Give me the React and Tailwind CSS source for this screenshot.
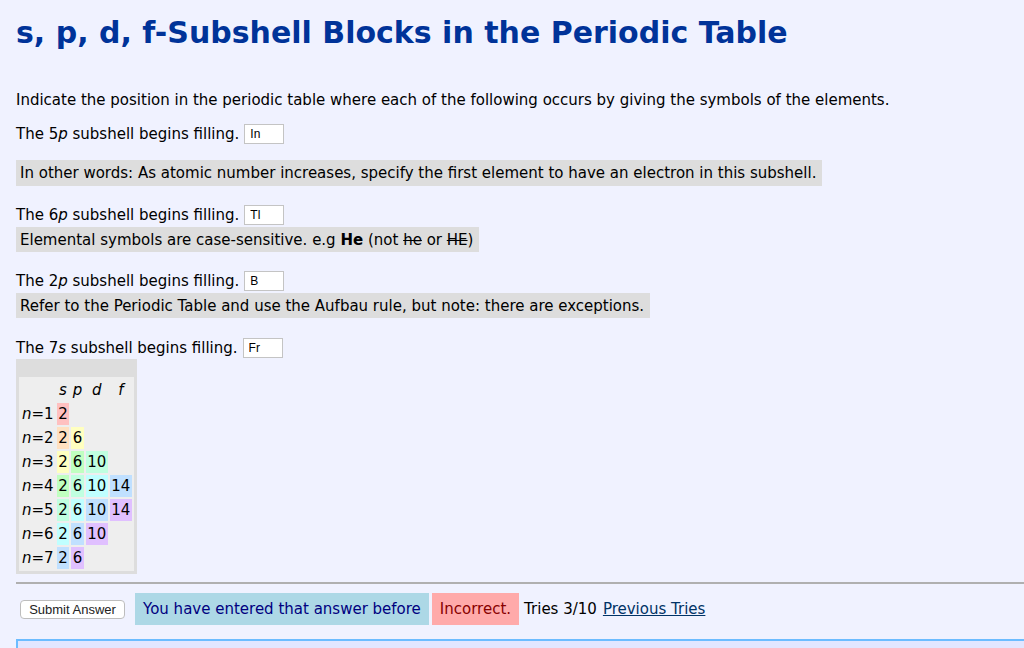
const shades = ['#ffc0c0', '#ffe0c0', '#ffffc0', '#c0ffc0', '#c0ffe0', '#c0ffff', '#c0e0ff', '#e0c0ff'];

// electrons per subshell for each shell n
const rows = [
  [2],
  [2, 6],
  [2, 6, 10],
  [2, 6, 10, 14],
  [2, 6, 10, 14],
  [2, 6, 10],
  [2, 6],
];

function Answer({ value }) {
  return (
    <input
      type="text"
      readOnly
      defaultValue={value}
      className="ml-[5px] w-[40px] h-[20px] border border-[#c4c4c4] bg-white pl-[5px] text-[12px] font-['Liberation_Sans',Arial,sans-serif] text-black outline-none"
    />
  );
}

function Question({ n, l }) {
  return (
    <div className="flex items-center h-[22px]">
      <span>
        The {n}
        <i>{l}</i> subshell begins filling.
      </span>
      <Answer value={{ '5p': 'In', '6p': 'Tl', '2p': 'B', '7s': 'Fr' }[`${n}${l}`]} />
    </div>
  );
}

function Hint({ children, tall }) {
  return (
    <div className={`inline-flex items-center bg-[#dddddd] pl-[4px] pr-[6px] ${tall ? 'h-[26px]' : 'h-[25px]'}`}>
      {children}
    </div>
  );
}

function ShellTable() {
  return (
    <div className="inline-block bg-[#dddddd] px-[3px] pb-[3px] pt-[18px]">
      <table className="bg-[#eeeeee] border-separate border-spacing-[2px]">
        <tbody>
          <tr className="h-[22px]">
            <td className="px-px"></td>
            <td className="px-[1.5px] text-center italic">s</td>
            <td className="px-[1.5px] text-center italic">p</td>
            <td className="px-[1.5px] text-center italic">d</td>
            <td className="px-[1.5px] text-center italic">f</td>
          </tr>
          {rows.map((cells, i) => (
            <tr key={i} className="h-[22px]">
              <td className="px-[1px]">
                <i>n</i>={i + 1}
              </td>
              {[0, 1, 2, 3].map((l) => (
                <td
                  key={l}
                  className="px-[1.5px] text-center"
                  style={cells[l] ? { backgroundColor: shades[i + l] } : undefined}
                >
                  {cells[l] || ''}
                </td>
              ))}
            </tr>
          ))}
        </tbody>
      </table>
    </div>
  );
}

export default function App() {
  return (
    <div className="min-h-screen overflow-hidden bg-[#f0f2ff] pl-4 text-[15px] leading-[22px] text-black font-['DejaVu_Sans',Verdana,sans-serif]">
      <h1 className="pt-[15px] text-[30px] leading-[36px] font-bold text-[#003399]">
        s, p, d, f-Subshell Blocks in the Periodic Table
      </h1>

      <p className="mt-[38px] h-[22px]">
        Indicate the position in the periodic table where each of the following occurs by giving the symbols of the elements.
      </p>

      <div className="mt-[12px]">
        <Question n="5" l="p" />
      </div>
      <div className="mt-[15px]">
        <Hint tall>In other words: As atomic number increases, specify the first element to have an electron in this subshell.</Hint>
      </div>

      <div className="mt-[18px]">
        <Question n="6" l="p" />
      </div>
      <div className="mt-px">
        <Hint>
          <span>
            Elemental symbols are case-sensitive. e.g <b>He</b> (not <s>he</s> or <s>HE</s>)
          </span>
        </Hint>
      </div>

      <div className="mt-[18px]">
        <Question n="2" l="p" />
      </div>
      <div className="mt-px">
        <Hint>Refer to the Periodic Table and use the Aufbau rule, but note: there are exceptions.</Hint>
      </div>

      <div className="mt-[19px]">
        <Question n="7" l="s" />
      </div>
      <div className="flex">
        <ShellTable />
      </div>

      <div className="mt-[8px] border-t-2 border-[#b0b0b0]"></div>

      <div className="mt-[9px] flex items-center h-[32px]">
        <button className="ml-[4px] h-[19px] w-[105px] rounded-[4px] border border-[#bdbdbd] bg-white text-[13px] leading-[17px] font-['Liberation_Sans',Arial,sans-serif] text-[#222]">
          Submit Answer
        </button>
        <div className="ml-[10px] flex h-[32px] items-center bg-[#add8e6] px-[8px] text-[#000080]">
          You have entered that answer before
        </div>
        <div className="ml-[3px] flex h-[32px] items-center bg-[#ffaaaa] px-[8px] text-[#880000]">Incorrect.</div>
        <span className="ml-[5px]">Tries 3/10</span>
        <a href="#" className="ml-[6px] text-[#003366] underline">
          Previous Tries
        </a>
      </div>

      <div className="mt-[14px] h-[40px] border-t-2 border-l-2 border-[#6cbcff] bg-[#e2e6ff] pl-[5px] pt-[7px]">
        <div className="h-[3px] w-[8px] bg-[#aaaaaa]"></div>
      </div>
    </div>
  );
}
